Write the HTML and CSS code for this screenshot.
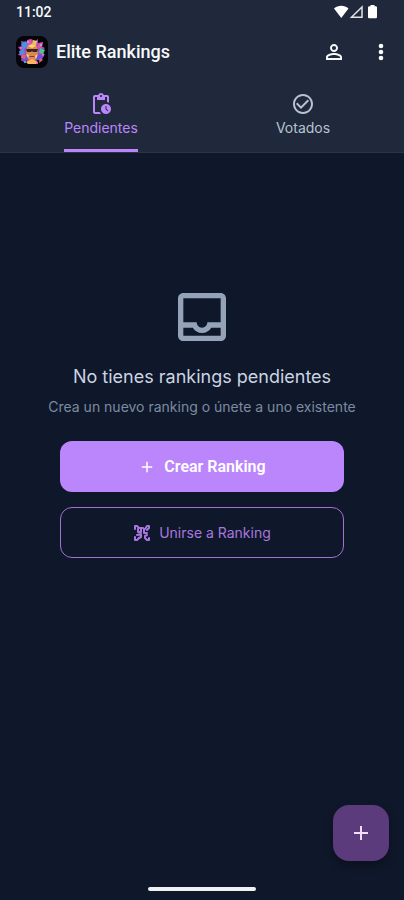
FILE: index.html
```html
<!DOCTYPE html>
<html lang="es">
<head>
<meta charset="utf-8">
<meta name="viewport" content="width=device-width, initial-scale=1">
<title>Elite Rankings</title>
<link rel="stylesheet" href="styles.css">
</head>
<body>
<div class="app">
  <header class="header">
    <div class="status">
      <span>11:02</span>
      <svg class="status-icons" width="44" height="14" viewBox="0 0 44 14" aria-hidden="true">
        <path d="M0 3.5C4-.2 10.500-.2 14.500 3.500L7.250 13z" fill="#fff"/>
        <path d="M17.500 12.200 28 2v10.200z" fill="none" stroke="#e2e2e2" stroke-width="1.500"/>
        <path d="M36.500 0h4v1.200h1c1 0 1.500.5 1.500 1.500v9c0 1-.5 1.500-1.500 1.500h-6c-1 0-1.500-.5-1.500-1.500v-9c0-1 .5-1.500 1.500-1.500h1z" fill="#fff"/>
      </svg>
    </div>
    <div class="bar">
      <svg class="logo" width="32" height="32" viewBox="0 0 32 32" aria-hidden="true">
        <rect width="32" height="32" rx="8" fill="#050407"/>
        <path d="M16 3l2 3 4-3v4l5-1-2 4 4 2-3 3 3 4-4 1 1 5-5-1-2 4-3-3-4 3-2-4-5 1 1-5-4-1 3-4-3-4 4-1-1-5 5 1z" fill="#a448bd"/>
        <path d="M5 8l5-3 2 5-5 4zM3 15l5-2 1 5-5 1z" fill="#4c8fe8"/>
        <path d="M11 4l4-1 1 6-4 1zM22 8l5-2-1 5-4 2z" fill="#ef4ca8"/>
        <path d="M17 4l4 1-1 5-4-1z" fill="#f2c24b"/>
        <path d="M24 12l5 2-2 4-4-1z" fill="#43c98f"/>
        <path d="M22 18l6 2-3 5-5-2zM5 20l5-2 2 6-5 2z" fill="#6654df"/>
        <path d="M6 18l4 1-1 4-4-1zM24 22l3 2-4 3z" fill="#ed5a75"/>
        <path d="M11 10l5-2 5 2 1 6-2 7-4 3-4-3-2-7z" fill="#d98a50"/>
        <path d="M12 10l4-2 4 2-4 2zM10 18l3 1-1 3zM19 20l3-2-2 5z" fill="#ffd47c"/>
        <path d="M10 13h12l-1 3h-4l-1-1-1 1h-4z" fill="#3a2226"/>
        <path d="M13 20h6l-1 1h-4z" fill="#8d3b30"/>
        <path d="M10 26l6-3 6 3-2 2h-8z" fill="#ffb45f"/>
        <g fill="#ff71d0"><circle cx="5" cy="12" r="1"/><circle cx="27" cy="19" r="1"/><circle cx="21" cy="27" r="1"/></g>
        <g fill="#62d8ef"><circle cx="25" cy="9" r="1"/><circle cx="9" cy="26" r="1"/><circle cx="12" cy="6" r="1"/></g>
      </svg>
      <h1 class="title">Elite Rankings</h1>
      <button class="icon-button" aria-label="Perfil">
        <svg width="24" height="24" viewBox="0 0 24 24"><path d="M12 5.900a2.100 2.100 0 1 1 0 4.200 2.100 2.100 0 0 1 0-4.200m0 9c2.970 0 6.100 1.460 6.100 2.100v1.100H5.900V17c0-.64 3.130-2.100 6.100-2.100M12 4C9.790 4 8 5.790 8 8s1.790 4 4 4 4-1.790 4-4-1.790-4-4-4zm0 9c-2.670 0-8 1.340-8 4v3h16v-3c0-2.660-5.330-4-8-4z"/></svg>
      </button>
      <button class="icon-button" aria-label="Más opciones">
        <svg width="24" height="24" viewBox="0 0 24 24"><circle cx="12" cy="6" r="2.300"/><circle cx="12" cy="12" r="2.300"/><circle cx="12" cy="18" r="2.300"/></svg>
      </button>
    </div>
    <div class="tabs" role="tablist">
      <button class="tab active" role="tab" aria-selected="true">
        <svg width="24" height="24" viewBox="0 0 24 24"><path d="M17 12c-2.760 0-5 2.240-5 5s2.240 5 5 5 5-2.240 5-5-2.240-5-5-5zm1.650 7.350L16.500 17.200V14h1v2.790l1.850 1.850-.7.710zM18 3h-3.180C14.400 1.840 13.300 1 12 1s-2.400.84-2.820 2H6c-1.100 0-2 .9-2 2v15c0 1.100.9 2 2 2h6.110c-.59-.57-1.070-1.250-1.420-2H6V5h2v3h8V5h2v5.080c.71.100 1.380.31 2 .6V5c0-1.100-.9-2-2-2zm-6 2c-.55 0-1-.45-1-1s.45-1 1-1 1 .45 1 1-.45 1-1 1z"/></svg>
        <span class="tab-label">Pendientes</span>
      </button>
      <button class="tab" role="tab" aria-selected="false">
        <svg width="24" height="24" viewBox="0 0 24 24"><path d="M16.590 7.580 10 14.170l-3.590-3.580L5 12l5 5 8-8zM12 2C6.480 2 2 6.480 2 12s4.480 10 10 10 10-4.480 10-10S17.520 2 12 2zm0 18c-4.420 0-8-3.580-8-8s3.580-8 8-8 8 3.580 8 8-3.580 8-8 8z"/></svg>
        <span class="tab-label">Votados</span>
      </button>
    </div>
  </header>
  <main class="empty">
    <svg class="inbox" width="64" height="64" viewBox="0 0 24 24" aria-hidden="true"><path d="M19 3H5c-1.100 0-2 .9-2 2v14c0 1.100.9 2 2 2h14c1.100 0 2-.9 2-2V5c0-1.100-.9-2-2-2zm0 16H5v-3h3.560c.69 1.190 1.970 2 3.450 2s2.750-.81 3.450-2H19v3zm0-5h-4.990c0 1.100-.9 2-2 2s-2-.9-2-2H5V5h14v9z"/></svg>
    <h2 class="heading">No tienes rankings pendientes</h2>
    <p class="hint">Crea un nuevo ranking o únete a uno existente</p>
    <div class="actions">
      <button class="action primary">
        <svg width="18" height="18" viewBox="0 0 24 24"><path d="M19 13h-6v6h-2v-6H5v-2h6V5h2v6h6z"/></svg>
        Crear Ranking
      </button>
      <button class="action outline">
        <svg width="18" height="18" viewBox="0 0 18 18"><g fill="none" stroke="currentColor" stroke-width="2" stroke-linecap="round" stroke-linejoin="round"><path d="M2 5V2h2l2 2h4M12 5l2-3h2v2l-2 2M16 14v2h-2l-2-2v-2l2-1M2 13v3h2l2-2"/><path d="M5 5v3h3V5M4 11l4-1v3l-2 1M11 5v4h3"/></g></svg>
        Unirse a Ranking
      </button>
    </div>
  </main>
  <button class="fab" aria-label="Crear ranking">
    <svg width="24" height="24" viewBox="0 0 24 24"><path d="M19 13h-6v6h-2v-6H5v-2h6V5h2v6h6z"/></svg>
  </button>
  <div class="home-indicator"></div>
</div>
</body>
</html>
```
FILE: styles.css
```css
* {
  box-sizing: border-box;
}

body {
  margin: 0;
  background: #0f172a;
  color: #f8fafc;
  font-family: Inter, "Liberation Sans", sans-serif;
}

button {
  padding: 0;
  border: 0;
  background: none;
  color: inherit;
  font: inherit;
}

svg {
  flex: none;
  fill: currentColor;
}

.app {
  position: relative;
  display: flex;
  flex-direction: column;
  min-height: 100vh;
}

.header {
  background: #1f293b;
  border-bottom: 1px solid #2b3446;
}

.status {
  display: flex;
  align-items: center;
  justify-content: space-between;
  height: 24px;
  padding: 0 26px 0 16px;
  font: 500 14px/24px Roboto, sans-serif;
}

.bar {
  display: flex;
  align-items: center;
  height: 56px;
  padding: 0 0 0 16px;
}

.title {
  flex: 1;
  margin: 0 0 0 8px;
  font: 500 18px/24px Roboto, sans-serif;
}

.icon-button {
  display: flex;
  align-items: center;
  justify-content: center;
  width: 47px;
  height: 48px;
}

.tabs {
  display: flex;
  height: 72px;
}

.tab {
  display: flex;
  flex: 1;
  flex-direction: column;
  align-items: center;
  justify-content: space-between;
  padding-top: 12px;
  color: #b8c3d2;
  font-size: 14px;
  line-height: 20px;
}

.tab-label {
  height: 34px;
}

.active {
  color: #bb86fc;
}

.active .tab-label {
  border-bottom: 3px solid;
  border-radius: 3px 3px 0 0;
}

.empty {
  display: flex;
  flex: 1;
  flex-direction: column;
  align-items: center;
  padding: 132px 24px 0;
}

.inbox {
  color: #94a3b8;
}

.heading {
  margin: 16px 0 0;
  color: #cbd5e1;
  font-size: 18px;
  font-weight: 400;
  line-height: 24px;
}

.hint {
  margin: 8px 0 0;
  color: #7d8ba1;
  font-size: 14px;
  line-height: 20px;
}

.actions {
  display: flex;
  flex-direction: column;
  gap: 15px;
  width: 80%;
  max-width: 400px;
  margin-top: 24px;
}

.action {
  display: flex;
  align-items: center;
  justify-content: center;
  gap: 8px;
  height: 51px;
  border-radius: 12px;
}

.primary {
  background: #bb86fc;
  color: #fff;
  font: 600 16px/24px Roboto, sans-serif;
}

.outline {
  border: 1px solid #a66fd0;
  color: #a777df;
  font-size: 14px;
  line-height: 20px;
}

.fab {
  position: absolute;
  right: 15px;
  bottom: 39px;
  display: flex;
  align-items: center;
  justify-content: center;
  width: 56px;
  height: 56px;
  border-radius: 16px;
  background: #5b3b7c;
  color: #f0dcff;
  box-shadow: 0 4px 8px rgba(0, 0, 0, 0.3);
}

.home-indicator {
  align-self: center;
  width: 108px;
  height: 4px;
  margin-bottom: 9px;
  border-radius: 2px;
  background: #f1f1f3;
}
```
